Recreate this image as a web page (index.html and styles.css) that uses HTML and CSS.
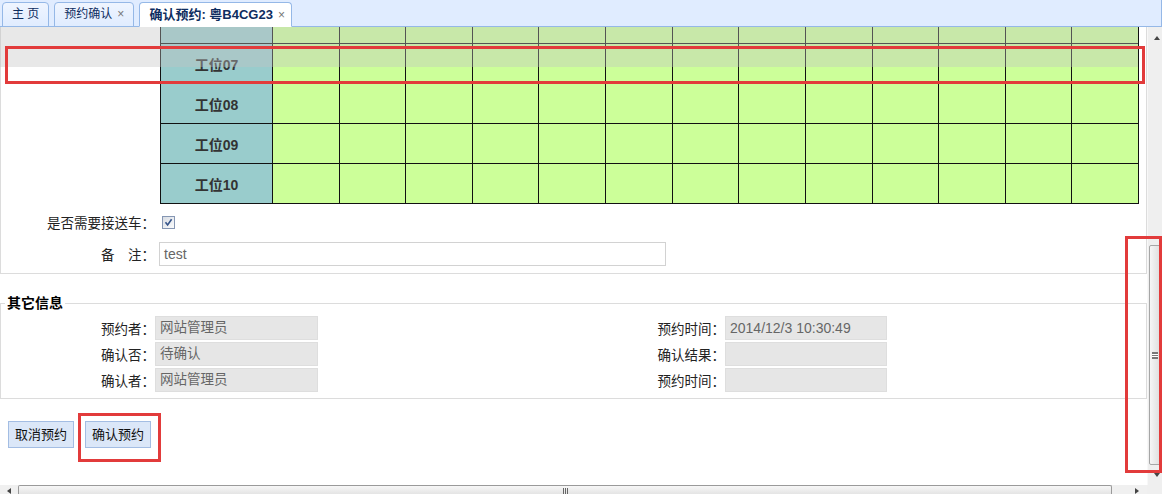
FILE: index.html
```html
<!DOCTYPE html>
<html>
<head>
<meta charset="utf-8">
<title>确认预约</title>
<link rel="stylesheet" href="styles.css">
</head>
<body>
<div class="page">
  <div class="tabs">
    <div class="tab">主 页</div>
    <div class="tab">预约确认<span class="x">×</span></div>
    <div class="tab active">确认预约: 粤B4CG23<span class="x">×</span></div>
  </div>
  <div class="main">
    <div class="viewport">
      <div class="panel">
        <div class="grid">
          <div class="h"></div><div></div><div></div><div></div><div></div><div></div><div></div><div></div><div></div><div></div><div></div><div></div><div></div><div></div>
          <div class="h">工位07</div><div></div><div></div><div></div><div></div><div></div><div></div><div></div><div></div><div></div><div></div><div></div><div></div><div></div>
          <div class="h">工位08</div><div></div><div></div><div></div><div></div><div></div><div></div><div></div><div></div><div></div><div></div><div></div><div></div><div></div>
          <div class="h">工位09</div><div></div><div></div><div></div><div></div><div></div><div></div><div></div><div></div><div></div><div></div><div></div><div></div><div></div>
          <div class="h">工位10</div><div></div><div></div><div></div><div></div><div></div><div></div><div></div><div></div><div></div><div></div><div></div><div></div><div></div>
        </div>
        <div class="frow first">
          <span class="lbl">是否需要接送车：</span>
          <span class="cb"><svg width="11" height="11" viewBox="0 0 11 11"><path d="M2.5 5.2 L4.6 8 L8.6 2.2" fill="none" stroke="#35548a" stroke-width="1.6"/></svg></span>
        </div>
        <div class="frow second">
          <span class="lbl">备　注：</span>
          <span class="txt">test</span>
        </div>
      </div>
      <fieldset class="info">
        <legend>其它信息</legend>
        <div class="info-grid">
          <span class="lbl2">预约者：</span><span class="ro">网站管理员</span>
          <span class="lbl2">预约时间：</span><span class="ro">2014/12/3 10:30:49</span>
          <span class="lbl2">确认否：</span><span class="ro">待确认</span>
          <span class="lbl2">确认结果：</span><span class="ro"></span>
          <span class="lbl2">确认者：</span><span class="ro">网站管理员</span>
          <span class="lbl2">预约时间：</span><span class="ro"></span>
        </div>
      </fieldset>
      <div class="buttons">
        <span class="btn">取消预约</span>
        <span class="btn">确认预约</span>
      </div>
    </div>
    <div class="vscroll">
      <span class="up"><span class="tri-up"></span></span>
      <span class="vthumb"><span class="vgrip"></span></span>
      <span class="down"><span class="tri-down"></span></span>
    </div>
  </div>
  <div class="hbar">
    <div class="hscroll">
      <span class="left"><span class="tri-left"></span></span>
      <span class="hthumb"><span class="hgrip"></span></span>
      <span class="right"><span class="tri-right"></span></span>
    </div>
    <div class="corner"></div>
  </div>
  <div class="band"></div>
  <div class="mark m1"></div>
  <div class="mark m2"></div>
  <div class="mark m3"></div>
</div>
</body>
</html>
```
FILE: styles.css
```css
html, body {
  margin: 0;
  padding: 0;
}
body {
  width: 1162px;
  height: 494px;
  overflow: hidden;
  background: #fff;
  font-family: "Liberation Sans", "Noto Sans CJK SC", sans-serif;
  font-size: 13.5px;
  color: #222;
}
.page {
  position: relative;
  width: 1162px;
  height: 494px;
  display: flex;
  flex-direction: column;
}

/* tabs */
.tabs {
  flex: none;
  height: 27px;
  box-sizing: border-box;
  background: #e0ecff;
  border-bottom: 1px solid #95b8e7;
  border-right: 1px solid #95b8e7;
  display: flex;
  align-items: flex-end;
  gap: 5px;
  padding-left: 2px;
}
.tab {
  height: 25px;
  margin-bottom: -1px;
  box-sizing: border-box;
  border: 1px solid #95b8e7;
  border-radius: 4px 4px 0 0;
  background: linear-gradient(#eff5ff, #e0ecff);
  padding: 0 9px;
  font-size: 12px;
  line-height: 23px;
  color: #0e2d5f;
  white-space: nowrap;
}
.tab.active {
  background: #fff;
  border-bottom-color: #fff;
  font-weight: bold;
  font-size: 13px;
  color: #0e2d5f;
  padding-right: 6px;
}
.x {
  margin-left: 5px;
  color: #777;
  font-weight: normal;
  font-size: 12px;
}

/* main */
.main {
  flex: none;
  height: 458px;
  display: flex;
}
.viewport {
  flex: 1;
  overflow: hidden;
}
.panel {
  margin-top: -24px;
  width: 1147px;
  box-sizing: border-box;
  border: 1px solid #dcdcdc;
  border-top: none;
  padding-bottom: 7px;
}
.grid {
  margin-left: 159px;
  width: 979px;
  box-sizing: border-box;
  display: grid;
  grid-template-columns: 112px repeat(13, 1fr);
  border-left: 1px solid #111;
  border-top: 1px solid #111;
}
.grid > div {
  height: 40px;
  box-sizing: border-box;
  border-right: 1px solid #111;
  border-bottom: 1px solid #111;
  background: #ccff99;
}
.grid > .h {
  background: #99cccc;
  display: flex;
  align-items: center;
  justify-content: center;
  font-weight: bold;
  font-size: 14px;
  color: #333;
}
.frow {
  display: flex;
  align-items: center;
  height: 24px;
}
.frow.first { margin-top: 6px; }
.frow.second { margin-top: 8px; }
.lbl {
  width: 154px;
  text-align: right;
  color: #222;
}
.cb {
  margin-left: 7px;
  width: 13px;
  height: 13px;
  box-sizing: border-box;
  border: 1px solid #8596b3;
  background: linear-gradient(135deg, #d9dde4, #fafbfc);
  display: flex;
  align-items: center;
  justify-content: center;
}
.cb svg { display: block; }
.txt {
  margin-left: 4px;
  width: 507px;
  height: 24px;
  box-sizing: border-box;
  border: 1px solid #d2d2d2;
  padding-left: 4px;
  line-height: 22px;
  font-size: 14px;
  color: #666;
}

/* info fieldset */
.info {
  margin: 19px 0 0 0;
  padding: 0 0 6px 0;
  width: 1147px;
  box-sizing: border-box;
  min-width: 0;
  border: 1px solid #dcdcdc;
}
.info legend {
  margin-left: 4px;
  padding: 0 2px;
  font-weight: bold;
  font-size: 14px;
  line-height: 20px;
  color: #000;
}
.info-grid {
  margin-top: 3px;
  display: grid;
  grid-template-columns: 154px 163px 407px 162px;
  row-gap: 2px;
  align-items: center;
}
.lbl2 {
  text-align: right;
  color: #222;
}
.ro {
  height: 24px;
  box-sizing: border-box;
  background: #e6e6e6;
  border: 1px solid #dedede;
  padding-left: 4px;
  line-height: 22px;
  color: #666;
  font-size: 13.5px;
  white-space: nowrap;
}
.ro:nth-child(4) { font-size: 14px; }

/* buttons */
.buttons {
  margin-top: 22px;
  padding-left: 8px;
  display: flex;
  gap: 11px;
}
.btn {
  height: 27px;
  box-sizing: border-box;
  border: 1px solid #a3bde3;
  background: #dbe7f8;
  padding: 0 6px;
  line-height: 25px;
  font-size: 13px;
  color: #111;
}

/* vertical scrollbar */
.vscroll {
  flex: none;
  width: 15px;
  background: #efefef;
  border-left: 1px solid #f8f8f8;
  box-sizing: border-box;
  display: flex;
  flex-direction: column;
  align-items: center;
}
.up, .down {
  height: 21px;
  width: 100%;
  display: flex;
  align-items: center;
  justify-content: center;
  padding-left: 3px;
  box-sizing: border-box;
}
.down {
  margin-top: auto;
  height: 20px;
}
.tri-up {
  width: 0; height: 0;
  border-left: 3px solid transparent;
  border-right: 3px solid transparent;
  border-bottom: 4px solid #444;
}
.tri-down {
  width: 0; height: 0;
  border-left: 3px solid transparent;
  border-right: 3px solid transparent;
  border-top: 4px solid #444;
}
.vthumb {
  margin-top: 197px;
  width: 12px;
  height: 220px;
  box-sizing: border-box;
  border: 1px solid #a6a6a6;
  border-radius: 2px;
  background: linear-gradient(to right, #f6f6f6, #dedede);
  display: flex;
  align-items: center;
  justify-content: center;
}
.vgrip {
  width: 6px;
  height: 5px;
  border-top: 1px solid #777;
  border-bottom: 1px solid #777;
  background: linear-gradient(#fff 0 1px, #777 1px 2px, #fff 2px);
  background-size: 100% 2px;
  background-position: 0 1px;
  background-repeat: repeat-y;
}

/* horizontal scrollbar */
.hbar {
  flex: none;
  height: 9px;
  display: flex;
}
.hscroll {
  flex: 1;
  background: #f0f0f0;
  display: flex;
  align-items: flex-start;
}
.left {
  width: 18px;
  height: 9px;
  display: flex;
  align-items: center;
  justify-content: center;
  padding-top: 2px;
  box-sizing: border-box;
}
.tri-left {
  width: 0; height: 0;
  border-top: 3px solid transparent;
  border-bottom: 3px solid transparent;
  border-right: 4px solid #444;
}
.tri-right {
  width: 0; height: 0;
  border-top: 3px solid transparent;
  border-bottom: 3px solid transparent;
  border-left: 4px solid #444;
}
.hthumb {
  width: 1094px;
  height: 10px;
  box-sizing: border-box;
  border: 1px solid #9a9a9a;
  border-bottom: none;
  border-radius: 2px 2px 0 0;
  background: linear-gradient(#f7f7f7, #e2e2e2);
  display: flex;
  justify-content: center;
  padding-top: 2px;
}
.hgrip {
  width: 5px;
  height: 7px;
  background: linear-gradient(to right, #666 0 1px, transparent 1px 2px);
  background-size: 2px 100%;
}
.right {
  margin-left: 23px;
  height: 9px;
  display: flex;
  align-items: center;
  padding-top: 3px;
  box-sizing: border-box;
}
.corner {
  width: 15px;
  background: #efefef;
}

/* overlays */
.band {
  position: absolute;
  left: 0;
  top: 27px;
  width: 1138px;
  height: 40px;
  background: rgba(195, 195, 195, 0.38);
}
.mark {
  position: absolute;
  box-sizing: border-box;
  border: 3px solid #e23b3b;
}
.m1 { left: 5px; top: 46px; width: 1140px; height: 38px; }
.m2 { left: 1125px; top: 236px; width: 37px; height: 237px; }
.m3 { left: 78px; top: 413px; width: 83px; height: 49px; }
```
